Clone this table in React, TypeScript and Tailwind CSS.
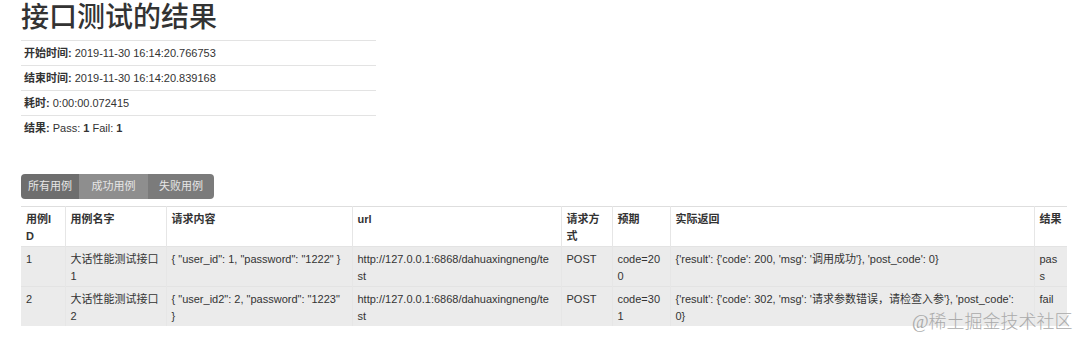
import React from "react";

const font = { fontFamily: '"Liberation Sans", "Noto Sans CJK SC", sans-serif' };

const headers: React.ReactNode[] = [
  <>用例I<br />D</>,
  "用例名字",
  "请求内容",
  "url",
  <>请求方<br />式</>,
  "预期",
  "实际返回",
  "结果",
];

const rows: React.ReactNode[][] = [
  [
    "1",
    <>大话性能测试接口<br />1</>,
    '{ "user_id": 1, "password": "1222" }',
    <>http://127.0.0.1:6868/dahuaxingneng/te<br />st</>,
    "POST",
    <>code=20<br />0</>,
    "{'result': {'code': 200, 'msg': '调用成功'}, 'post_code': 0}",
    <>pas<br />s</>,
  ],
  [
    "2",
    <>大话性能测试接口<br />2</>,
    <>{'{ "user_id2": 2, "password": "1223"'}<br />{"}"}</>,
    <>http://127.0.0.1:6868/dahuaxingneng/te<br />st</>,
    "POST",
    <>code=30<br />1</>,
    <>{"{'result': {'code': 302, 'msg': '请求参数错误，请检查入参'}, 'post_code':"}<br />{"0}"}</>,
    "fail",
  ],
];

const widths = [44, 101, 186, 209, 51, 58, 364, 33];

export default function App() {
  return (
    <div className="relative w-[1080px] h-[340px] bg-white text-[#333] overflow-hidden" style={font}>
      <div className="pl-[21px]">
        <h1 className="mt-[1px] text-[28px] leading-[34px] font-medium text-[#333] mb-[5px]">接口测试的结果</h1>
        <div className="w-[355px] text-[11px]">
          <div className="border-t border-[#e3e3e3] py-[4px] leading-[16px] pl-[3px]">
            <span className="font-bold">开始时间:</span> 2019-11-30 16:14:20.766753
          </div>
          <div className="border-t border-[#e3e3e3] py-[4px] leading-[16px] pl-[3px]">
            <span className="font-bold">结束时间:</span> 2019-11-30 16:14:20.839168
          </div>
          <div className="border-t border-[#e3e3e3] py-[4px] leading-[16px] pl-[3px]">
            <span className="font-bold">耗时:</span> 0:00:00.072415
          </div>
          <div className="border-t border-[#e3e3e3] py-[4px] leading-[16px] pl-[3px]">
            <span className="font-bold">结果:</span> Pass: <span className="font-bold">1</span> Fail:{" "}
            <span className="font-bold">1</span>
          </div>
        </div>

        <div className="mt-[34px] flex h-[25px] w-fit rounded-[4px] overflow-hidden text-[11px] text-[#e6e6e6]">
          <div className="w-[58px] bg-[#6e6e6e] flex items-center justify-center">所有用例</div>
          <div className="w-[69px] bg-[#8e8e8e] flex items-center justify-center">成功用例</div>
          <div className="w-[66px] bg-[#7b7b7b] flex items-center justify-center">失败用例</div>
        </div>

        <table className="mt-[7px] w-[1046px] table-fixed border-collapse text-[11px] leading-[17px]">
          <colgroup>
            {widths.map((w, i) => (
              <col key={i} style={{ width: w }} />
            ))}
          </colgroup>
          <thead>
            <tr className="bg-white border-t border-[#dedede]">
              {headers.map((h, i) => (
                <th
                  key={i}
                  className="text-left align-top font-bold pt-[4px] pb-[1px] pl-[5px] pr-[2px] whitespace-nowrap border-l border-[#e6e6e6] first:border-l-0"
                >
                  {h}
                </th>
              ))}
            </tr>
          </thead>
          <tbody>
            {rows.map((r, ri) => (
              <tr key={ri} className="bg-[#ebebeb] border-t border-[#e3e3e3]">
                {r.map((c, ci) => (
                  <td
                    key={ci}
                    className="align-top pt-[4px] pb-[1px] pl-[5px] pr-[2px] whitespace-nowrap border-l border-[#e6e6e6] first:border-l-0"
                  >
                    {c}
                  </td>
                ))}
              </tr>
            ))}
          </tbody>
        </table>
      </div>

      <div
        className="absolute left-[912px] top-[310px] text-[18px] leading-[24px] text-[#aaaaaa] font-light whitespace-nowrap"
        style={{ fontFamily: '"Liberation Serif", "Noto Sans CJK SC", serif' }}
      >
        @稀土掘金技术社区
      </div>
    </div>
  );
}
